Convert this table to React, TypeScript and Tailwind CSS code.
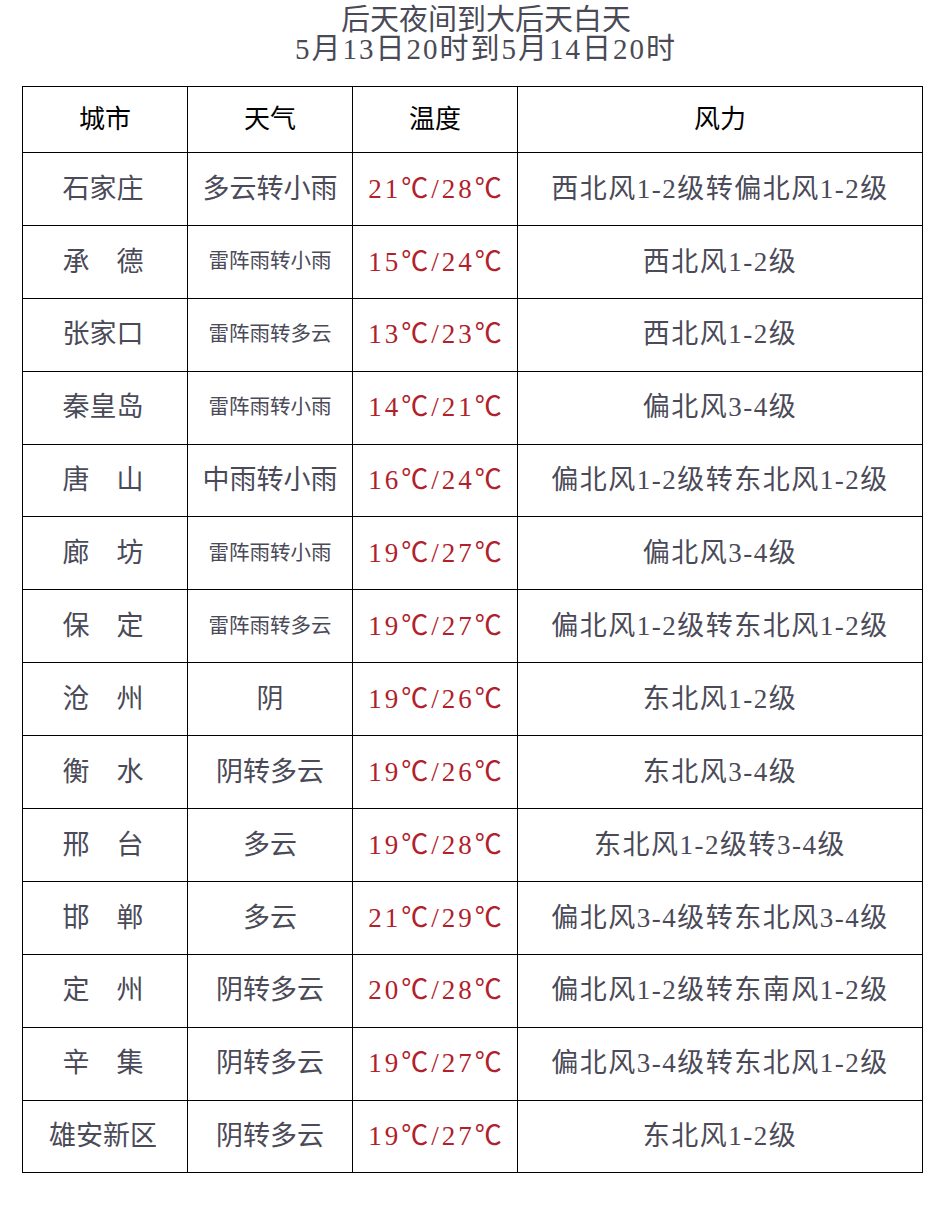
const rows: { city: string; weather: string; small?: boolean; temp: string; wind: string }[] = [
  { city: '石家庄', weather: '多云转小雨', temp: '21℃/28℃', wind: '西北风1-2级转偏北风1-2级' },
  { city: '承\u3000德', weather: '雷阵雨转小雨', small: true, temp: '15℃/24℃', wind: '西北风1-2级' },
  { city: '张家口', weather: '雷阵雨转多云', small: true, temp: '13℃/23℃', wind: '西北风1-2级' },
  { city: '秦皇岛', weather: '雷阵雨转小雨', small: true, temp: '14℃/21℃', wind: '偏北风3-4级' },
  { city: '唐\u3000山', weather: '中雨转小雨', temp: '16℃/24℃', wind: '偏北风1-2级转东北风1-2级' },
  { city: '廊\u3000坊', weather: '雷阵雨转小雨', small: true, temp: '19℃/27℃', wind: '偏北风3-4级' },
  { city: '保\u3000定', weather: '雷阵雨转多云', small: true, temp: '19℃/27℃', wind: '偏北风1-2级转东北风1-2级' },
  { city: '沧\u3000州', weather: '阴', temp: '19℃/26℃', wind: '东北风1-2级' },
  { city: '衡\u3000水', weather: '阴转多云', temp: '19℃/26℃', wind: '东北风3-4级' },
  { city: '邢\u3000台', weather: '多云', temp: '19℃/28℃', wind: '东北风1-2级转3-4级' },
  { city: '邯\u3000郸', weather: '多云', temp: '21℃/29℃', wind: '偏北风3-4级转东北风3-4级' },
  { city: '定\u3000州', weather: '阴转多云', temp: '20℃/28℃', wind: '偏北风1-2级转东南风1-2级' },
  { city: '辛\u3000集', weather: '阴转多云', temp: '19℃/27℃', wind: '偏北风3-4级转东北风1-2级' },
  { city: '雄安新区', weather: '阴转多云', temp: '19℃/27℃', wind: '东北风1-2级' },
];

const font = { fontFamily: '"Liberation Serif", "Noto Sans CJK SC", serif' };

export default function App() {
  return (
    <div className="w-[942px] h-[1218px] bg-white" style={font}>
      {/* 标题 */}
      <div className="pt-[6px] pl-[30px] text-center text-[#4a4a56] text-[29px] leading-[29px]">
        <div>后天夜间到大后天白天</div>
        <div className="tracking-[2px]">5月13日20时到5月14日20时</div>
      </div>

      <table className="mt-[22px] ml-[22px] w-[901px] border-collapse table-fixed">
        <colgroup>
          <col className="w-[165px]" />
          <col className="w-[165px]" />
          <col className="w-[165px]" />
          <col />
        </colgroup>
        <thead>
          <tr className="h-[66px] text-[26px] text-black">
            <th className="border-[1.5px] border-black font-normal">城市</th>
            <th className="border-[1.5px] border-black font-normal">天气</th>
            <th className="border-[1.5px] border-black font-normal">温度</th>
            <th className="border-[1.5px] border-black font-normal">风力</th>
          </tr>
        </thead>
        <tbody>
          {rows.map((r, i) => (
            <tr key={i} className="h-[72.9px] text-[#4a4a58] text-[27px]">
              <td className="border-[1.5px] border-black text-center whitespace-nowrap pr-[4px]">{r.city}</td>
              <td className={`border-[1.5px] border-black text-center whitespace-nowrap ${r.small ? 'text-[20.5px]' : ''}`}>
                {r.weather}
              </td>
              <td className="border-[1.5px] border-black text-center whitespace-nowrap text-[#b0212b] tracking-[3px] pl-[3px]">
                {r.temp}
              </td>
              <td className="border-[1.5px] border-black text-center whitespace-nowrap tracking-[1.5px]">{r.wind}</td>
            </tr>
          ))}
        </tbody>
      </table>
    </div>
  );
}
